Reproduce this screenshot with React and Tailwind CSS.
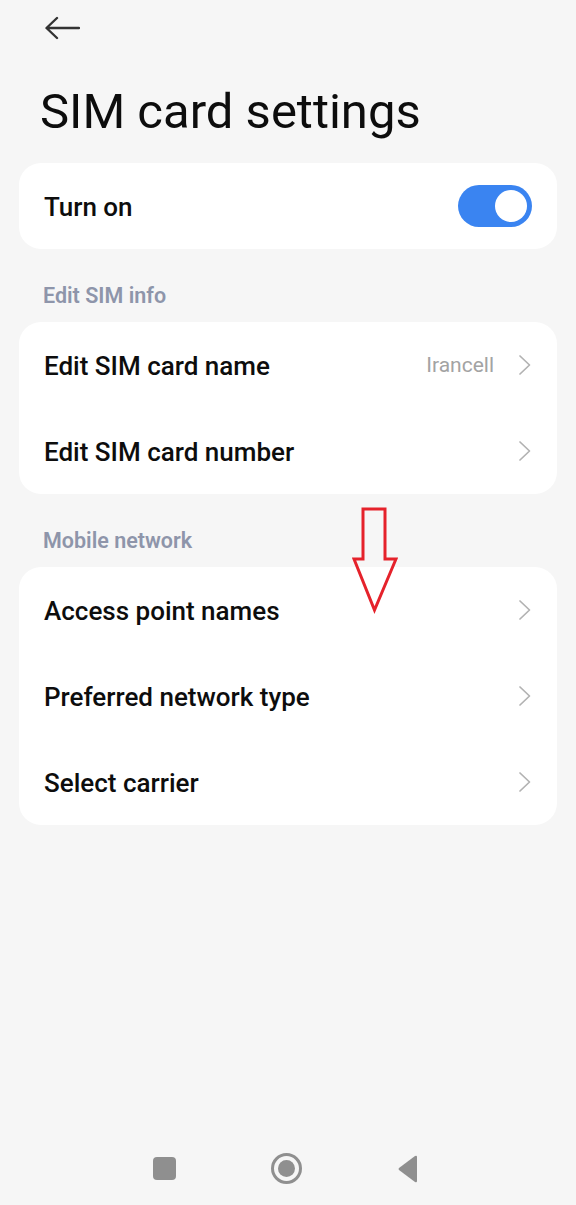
import React from "react";

const font = { fontFamily: "Roboto, 'Noto Sans', sans-serif" };

function Chevron() {
  return (
    <svg width="14" height="22" viewBox="0 0 14 22" className="shrink-0">
      <path d="M2 2 L11.5 11 L2 20" fill="none" stroke="#b2b2b2" strokeWidth="1.7" strokeLinecap="round" strokeLinejoin="round" />
    </svg>
  );
}

function Row({ label, value }) {
  return (
    <div className="flex h-[86px] items-center pl-[25px] pr-[25px]">
      <span className="flex-1 pt-[3px] text-[26px] font-medium text-[#0d0d0d]">{label}</span>
      {value && <span className="mr-[24px] pt-[2px] text-[21px] text-[#a3a3a3]">{value}</span>}
      <Chevron />
    </div>
  );
}

function SectionHeader({ children }) {
  return (
    <div className="h-[73px] pl-[43px] pt-[34px] text-[21.5px] leading-[26px] font-semibold text-[#8e95aa]">
      {children}
    </div>
  );
}

export default function App() {
  return (
    <div className="relative flex min-h-[1205px] flex-col bg-[#f6f6f6]" style={font}>
      <div className="flex h-[54px] items-center pl-[44px] pt-[1px]">
        <svg width="36" height="24" viewBox="0 0 36 24">
          <path d="M35 12 H3 M13 2 L2.5 12 L13 22" fill="none" stroke="#333333" strokeWidth="2.4" strokeLinecap="round" strokeLinejoin="round" />
        </svg>
      </div>
      <div className="flex h-[109px] items-center pl-[40px] pt-[6px]">
        <h1 className="text-[49px] font-normal leading-none text-[#0d0d0d]">SIM card settings</h1>
      </div>

      <div className="mx-[19px] rounded-[22px] bg-white">
        <div className="flex h-[86px] items-center pl-[25px] pr-[25px]">
          <span className="flex-1 pt-[3px] text-[26px] font-medium text-[#0d0d0d]">Turn on</span>
          <div className="flex h-[42px] w-[74px] items-center justify-end rounded-full bg-[#3a84f1] pr-[5px]">
            <div className="h-[32px] w-[32px] rounded-full bg-white" />
          </div>
        </div>
      </div>

      <SectionHeader>Edit SIM info</SectionHeader>
      <div className="mx-[19px] rounded-[22px] bg-white">
        <Row label="Edit SIM card name" value="Irancell" />
        <Row label="Edit SIM card number" />
      </div>

      <SectionHeader>Mobile network</SectionHeader>
      <div className="mx-[19px] rounded-[22px] bg-white">
        <Row label="Access point names" />
        <Row label="Preferred network type" />
        <Row label="Select carrier" />
      </div>

      <div className="flex-1" />

      <div className="flex h-[72px] items-center justify-center gap-[95px] pb-[1px] pr-[4px]">
        <div className="h-[23px] w-[23px] rounded-[4px] bg-[#8f8f8f]" />
        <div className="flex h-[31px] w-[31px] items-center justify-center rounded-full border-[3px] border-[#8f8f8f]">
          <div className="h-[17px] w-[17px] rounded-full bg-[#8f8f8f]" />
        </div>
        <svg width="22" height="28" viewBox="0 0 22 28">
          <path d="M20 2 L20 26 Q20 28 18 27 L2 15 Q1 14 2 13 L18 1 Q20 0 20 2 Z" fill="#8f8f8f" />
        </svg>
      </div>

      <svg
        className="absolute left-[352px] top-[506px]"
        width="46"
        height="108"
        viewBox="0 0 46 108"
      >
        <path d="M11 3 L33 3 L33 53 L44 53 L22.5 104 L2 53 L11 53 Z" fill="none" stroke="#e5222b" strokeWidth="3" strokeLinejoin="miter" />
      </svg>
    </div>
  );
}
